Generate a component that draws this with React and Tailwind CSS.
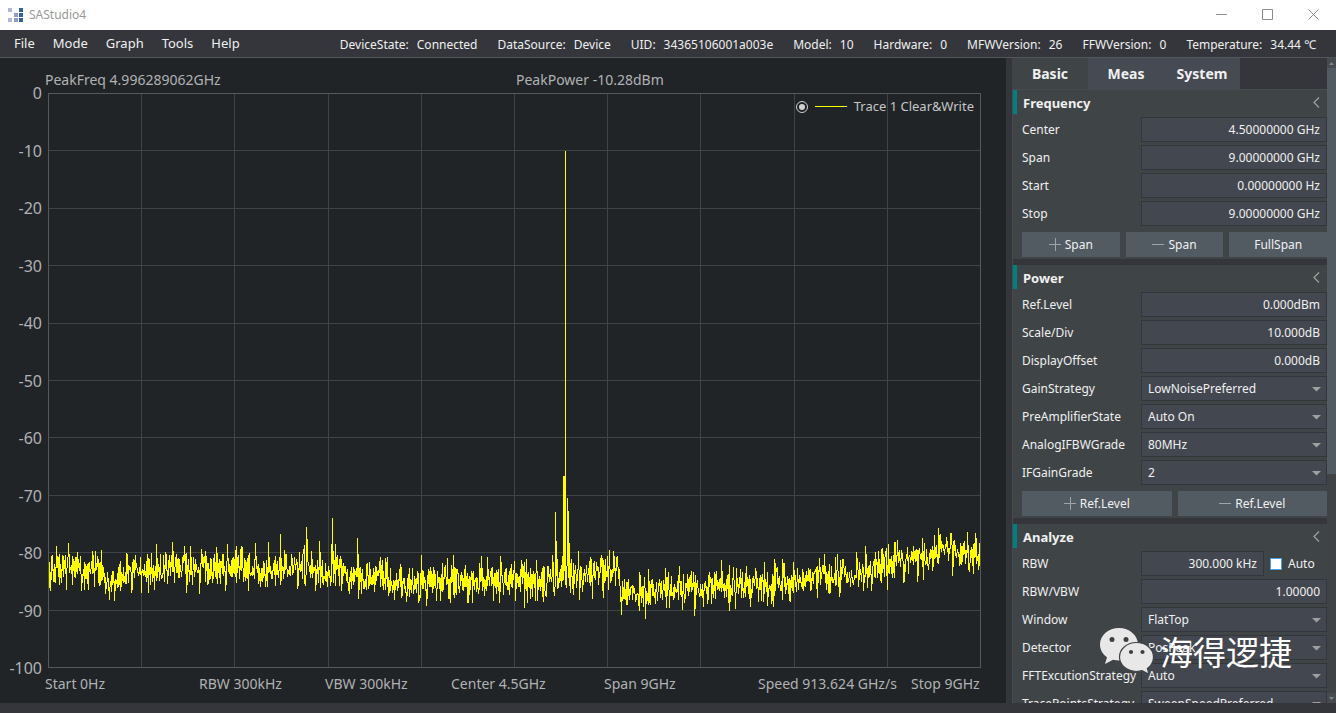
import { useId } from 'react'

const MENUS = ['File', 'Mode', 'Graph', 'Tools', 'Help']

const STATUS = [
  ['DeviceState', 'Connected'],
  ['DataSource', 'Device'],
  ['UID', '34365106001a003e'],
  ['Model', '10'],
  ['Hardware', '0'],
  ['MFWVersion', '26'],
  ['FFWVersion', '0'],
  ['Temperature', '34.44 ℃'],
]

const Y_LABELS = ['0', '-10', '-20', '-30', '-40', '-50', '-60', '-70', '-80', '-90', '-100']

const X_LABELS = [
  'Start 0Hz',
  'RBW 300kHz',
  'VBW 300kHz',
  'Center 4.5GHz',
  'Span 9GHz',
  'Speed 913.624 GHz/s',
  'Stop 9GHz',
]

// plot size in trace units
const PLOT_W = 932
const PLOT_H = 574

// noise floor: [x, y] control points, y grows downwards
const FLOOR = [
  [0, 478], [12, 473], [42, 477], [64, 487], [77, 482], [102, 474], [152, 474], [252, 475],
  [282, 479], [312, 484], [337, 483], [345, 492], [357, 492], [392, 487], [502, 487], [522, 483],
  [564, 479], [570, 481], [572, 500], [602, 497], [652, 493], [702, 492], [752, 488], [802, 481],
  [832, 472], [882, 462], [892, 455], [902, 459], [932, 460],
]

// single bins that stand out of the noise
const BINS = [
  [2, 497], [8, 453], [13, 489], [20, 450], [24, 491], [44, 458], [46, 493], [53, 457], [57, 500],
  [66, 507], [72, 497], [79, 461], [83, 499], [92, 464], [100, 499], [108, 451], [117, 459],
  [119, 490], [124, 449], [138, 499], [142, 453], [151, 500], [154, 461], [160, 490], [169, 460],
  [177, 497], [179, 451], [192, 456], [200, 497], [207, 450], [217, 493], [220, 449], [227, 492],
  [232, 441], [257, 492], [258, 434], [263, 458], [267, 497], [271, 448], [283, 451], [284, 425],
  [287, 451], [292, 463], [293, 497], [309, 445], [310, 505], [326, 498], [339, 464], [346, 506],
  [353, 504], [352, 471], [370, 509], [373, 462], [378, 512], [382, 474], [399, 465], [402, 509],
  [405, 462], [419, 509], [433, 463], [439, 464], [445, 507], [451, 509], [452, 463], [467, 507],
  [476, 514], [478, 466], [482, 505], [497, 502], [504, 462], [507, 419], [508, 448], [515, 383],
  [516, 383], [519, 405], [520, 418], [522, 499], [530, 458], [542, 464], [555, 504], [559, 463],
  [565, 458], [569, 463], [573, 521], [597, 525], [600, 476], [617, 475], [621, 514], [631, 473],
  [634, 516], [646, 522], [673, 467], [681, 517], [687, 515], [688, 475], [707, 475], [725, 513],
  [727, 470], [736, 470], [742, 508], [745, 469], [771, 465], [776, 461], [789, 461], [791, 503],
  [809, 465], [815, 497], [817, 453], [834, 455], [839, 496], [849, 447], [855, 489], [869, 488],
  [874, 445], [885, 473], [890, 435], [892, 441], [898, 444], [902, 440], [904, 482], [916, 448],
  [921, 474], [927, 440], [930, 476], [931, 449],
]

function floorAt(x) {
  let i = 1
  while (i < FLOOR.length - 1 && FLOOR[i][0] < x) i++
  const [x0, y0] = FLOOR[i - 1]
  const [x1, y1] = FLOOR[i]
  return y0 + ((y1 - y0) * (x - x0)) / (x1 - x0)
}

function buildTrace() {
  let seed = 4996289
  const rand = () => {
    seed = (seed * 1103515245 + 12345) % 2147483648
    return seed / 2147483648
  }
  const bins = new Map(BINS)
  const points = []
  for (let x = 1; x < PLOT_W; x++) {
    const base = floorAt(x)
    const noise = () => (rand() + rand() + rand() - 1.5) * 18
    points.push(`${x},${Math.round(base + noise())}`)
    points.push(`${x},${bins.get(x) ?? Math.round(base + noise())}`)
  }
  return points.join(' ')
}

const TRACE = buildTrace()

function Logo() {
  return (
    <svg width="15" height="14" viewBox="0 0 15 14" shapeRendering="crispEdges" aria-hidden="true">
      <path fill="#b0b5da" d="M0 0h4v4H0zM0 10h4v4H0z" />
      <path fill="#8f99ca" d="M6 5h4v4H6zM6 10h4v4H6z" />
      <path fill="#33629b" d="M11 0h4v4h-4zM11 5h4v4h-4zM11 10h4v4h-4z" />
    </svg>
  )
}

function WindowButton({ label, d }) {
  return (
    <button type="button" aria-label={label} className="flex h-full w-[46px] items-center justify-center">
      <svg width="11" height="11" viewBox="0 0 11 11" fill="none" stroke="#8c8c8c">
        <path d={d} />
      </svg>
    </button>
  )
}

function TitleBar() {
  return (
    <header className="flex h-[30px] shrink-0 items-center bg-white pb-px pl-2">
      <Logo />
      <h1 className="ml-[6px] text-[12px] text-[#999999]">SAStudio4</h1>
      <div className="ml-auto flex h-full">
        <WindowButton label="Minimize" d="M0 5.5h11" />
        <WindowButton label="Maximize" d="M.5 .5h10v10H.5z" />
        <WindowButton label="Close" d="M.5 .5l10 10M10.5 .5l-10 10" />
      </div>
    </header>
  )
}

function MenuBar() {
  return (
    <div className="flex h-7 shrink-0 items-center justify-between border-b border-[#50565c] bg-[#34363b] pr-5 text-[12px] whitespace-nowrap text-[#f0f0f0]">
      <nav className="flex gap-[18px] pl-[14px] text-[13px]">
        {MENUS.map(m => (
          <button key={m} type="button">{m}</button>
        ))}
      </nav>
      <dl className="flex gap-5 pt-[2px]">
        {STATUS.map(([name, value]) => (
          <div key={name} className="flex gap-2">
            <dt>{name}:</dt>
            <dd>{value}</dd>
          </div>
        ))}
      </dl>
    </div>
  )
}

function Plot() {
  const cols = Array.from({ length: 9 }, (_, i) => Math.round(((i + 1) * PLOT_W) / 10) + 0.5)
  const rows = Array.from({ length: 9 }, (_, i) => Math.round(((i + 1) * PLOT_H) / 10) + 0.5)
  return (
    <div className="relative min-w-0 flex-1">
      <svg
        className="absolute inset-0 h-full w-full"
        viewBox={`0 0 ${PLOT_W + 1} ${PLOT_H + 1}`}
        preserveAspectRatio="none"
        shapeRendering="crispEdges"
        fill="none"
        role="img"
        aria-label="Spectrum"
      >
        <g stroke="#3f4447">
          {cols.map(x => <path key={x} d={`M${x} 0V${PLOT_H}`} vectorEffect="non-scaling-stroke" />)}
          {rows.map(y => <path key={y} d={`M0 ${y}H${PLOT_W}`} vectorEffect="non-scaling-stroke" />)}
        </g>
        <rect x="0.5" y="0.5" width={PLOT_W} height={PLOT_H} stroke="#525a60" vectorEffect="non-scaling-stroke" />
        <polyline points={TRACE} transform="translate(0.5 0.5)" stroke="#ffff00" vectorEffect="non-scaling-stroke" />
        <path d="M517.5 58V480" stroke="#ffff00" vectorEffect="non-scaling-stroke" />
      </svg>
      <label className="absolute top-1 right-[7px] flex items-center gap-[7px] text-[13px] text-[#c4c6c8]">
        <input
          type="radio"
          name="trace"
          defaultChecked
          className="h-3 w-3 appearance-none rounded-full border border-[#d0d0d0] bg-[#d0d0d0] bg-clip-content p-[2px]"
        />
        <span className="h-px w-8 bg-[#ffff00]" />
        Trace 1 Clear&amp;Write
      </label>
    </div>
  )
}

function SpectrumPanel() {
  return (
    <main className="flex min-w-0 flex-1 flex-col bg-[#212426] pr-[25px] text-[14px] text-[#b0b2b4]">
      <div className="grid h-[35px] shrink-0 grid-cols-[471fr_465fr] items-center pt-2 pl-[45px]">
        <span>PeakFreq 4.996289062GHz</span>
        <span>PeakPower -10.28dBm</span>
      </div>
      <div className="flex min-h-0 flex-1">
        <div className="flex w-12 shrink-0 flex-col items-end justify-between pr-[6px] text-[16px]">
          {Y_LABELS.map(l => (
            <span key={l} className="flex h-0 items-center">{l}</span>
          ))}
        </div>
        <Plot />
      </div>
      <div className="grid h-[35px] shrink-0 grid-cols-[154fr_126fr_126fr_153fr_154fr_153fr_70fr] items-center pb-1 pl-[45px] whitespace-nowrap">
        {X_LABELS.map(l => (
          <span key={l} className="w-0">{l}</span>
        ))}
      </div>
    </main>
  )
}

function Row({ label, id, children }) {
  return (
    <div className="flex h-[25px] items-center pl-[9px]">
      <label htmlFor={id} className="w-[119px] shrink-0 whitespace-nowrap">{label}</label>
      {children}
    </div>
  )
}

function TextInput({ id, value }) {
  return (
    <input
      id={id}
      type="text"
      defaultValue={value}
      className="h-[25px] min-w-0 flex-1 border border-[#34363b] bg-[#43474f] px-[6px] text-right"
    />
  )
}

function TextRow({ label, value }) {
  const id = useId()
  return (
    <Row label={label} id={id}>
      <TextInput id={id} value={value} />
    </Row>
  )
}

function SelectRow({ label, value }) {
  const id = useId()
  return (
    <Row label={label} id={id}>
      <div className="relative min-w-0 flex-1">
        <select id={id} className="block h-[25px] w-full appearance-none border border-[#34363b] bg-[#43474f] px-[6px]">
          <option>{value}</option>
        </select>
        <svg className="pointer-events-none absolute top-[11px] right-[6px]" width="9" height="5" viewBox="0 0 9 5" fill="#a0a0a0" aria-hidden="true">
          <path d="M0 0h9L4.5 4.5z" />
        </svg>
      </div>
    </Row>
  )
}

function RbwRow() {
  const id = useId()
  return (
    <Row label="RBW" id={id}>
      <TextInput id={id} value="300.000 kHz" />
      <label className="flex w-[63px] shrink-0 items-center gap-[6px] pl-[6px]">
        <input type="checkbox" className="h-3 w-3 appearance-none border border-[#4a9ee0] bg-white" />
        Auto
      </label>
    </Row>
  )
}

function StepButton({ sign, label }) {
  return (
    <button type="button" className="flex h-[25px] flex-1 items-center justify-center gap-1 bg-[#525b62]">
      {sign && (
        <svg width="12" height="13" viewBox="0 0 12 13" stroke="#a0a4a6" shapeRendering="crispEdges" aria-hidden="true">
          <path d={sign === '+' ? 'M0 6.5h12M6.5 0v13' : 'M0 6.5h12'} />
        </svg>
      )}
      {label}
    </button>
  )
}

function Section({ title, children }) {
  return (
    <section className="shrink-0 border-b border-[#3f4447] bg-[#3f4447] pb-px">
      <div className="mb-[3px] flex h-6 items-center border-l-4 border-[#008080] pr-[7px] pl-[6px]">
        <h2 className="pt-[3px] text-[13px] font-bold">{title}</h2>
        <button type="button" aria-label={`Collapse ${title}`} className="ml-auto">
          <svg width="7" height="11" viewBox="0 0 7 11" fill="none" stroke="#a0a0a0" strokeWidth="1.2">
            <path d="M6 .5L1 5.5l5 5" />
          </svg>
        </button>
      </div>
      <div className="flex flex-col gap-[3px]">{children}</div>
    </section>
  )
}

function ButtonRow({ children }) {
  return <div className="mt-[3px] flex gap-[6px] pl-[9px]">{children}</div>
}

function ScrollBar() {
  return (
    <div className="flex w-[9px] shrink-0 flex-col bg-[#3f4346]" aria-hidden="true">
      <div className="flex h-[10px] items-center justify-center bg-[#464b50]">
        <svg width="5" height="3" viewBox="0 0 5 3" fill="#7a858e"><path d="M0 3h5L2.5 0z" /></svg>
      </div>
      <div className="flex-1">
        <div className="h-[65%] bg-[#525b62]" />
      </div>
      <div className="flex h-[10px] items-center justify-center bg-[#464b50]">
        <svg width="5" height="3" viewBox="0 0 5 3" fill="#7a858e"><path d="M0 0h5L2.5 3z" /></svg>
      </div>
    </div>
  )
}

function ControlPanel() {
  return (
    <aside className="flex w-[330px] shrink-0 border-l-[6px] border-[#34363b] text-[12px] text-[#f0f0f0]">
      <div className="flex min-w-0 flex-1 flex-col">
        <div className="flex h-8 shrink-0 border-b border-[#464b4f] text-[14px] font-bold">
          <button type="button" className="w-[76px] bg-[#3f4447]">Basic</button>
          <button type="button" className="w-[76px] bg-[#464a52]">Meas</button>
          <button type="button" className="w-[76px] bg-[#464a52]">System</button>
        </div>
        <div className="flex min-h-0 flex-1 flex-col gap-[6px] overflow-hidden border-l border-[#464b4f]">
          <Section title="Frequency">
            <TextRow label="Center" value="4.50000000 GHz" />
            <TextRow label="Span" value="9.00000000 GHz" />
            <TextRow label="Start" value="0.00000000 Hz" />
            <TextRow label="Stop" value="9.00000000 GHz" />
            <ButtonRow>
              <StepButton sign="+" label="Span" />
              <StepButton sign="-" label="Span" />
              <StepButton label="FullSpan" />
            </ButtonRow>
          </Section>
          <Section title="Power">
            <TextRow label="Ref.Level" value="0.000dBm" />
            <TextRow label="Scale/Div" value="10.000dB" />
            <TextRow label="DisplayOffset" value="0.000dB" />
            <SelectRow label="GainStrategy" value="LowNoisePreferred" />
            <SelectRow label="PreAmplifierState" value="Auto On" />
            <SelectRow label="AnalogIFBWGrade" value="80MHz" />
            <SelectRow label="IFGainGrade" value="2" />
            <ButtonRow>
              <StepButton sign="+" label="Ref.Level" />
              <StepButton sign="-" label="Ref.Level" />
            </ButtonRow>
          </Section>
          <Section title="Analyze">
            <RbwRow />
            <TextRow label="RBW/VBW" value="1.00000" />
            <SelectRow label="Window" value="FlatTop" />
            <SelectRow label="Detector" value="PosPeak" />
            <SelectRow label="FFTExcutionStrategy" value="Auto" />
            <SelectRow label="TracePointsStrategy" value="SweepSpeedPreferred" />
          </Section>
        </div>
      </div>
      <ScrollBar />
    </aside>
  )
}

function Watermark() {
  return (
    <div className="pointer-events-none absolute right-[44px] bottom-[38px] flex items-center gap-[6px] text-white">
      <svg width="55" height="48" viewBox="0 0 55 48" aria-hidden="true">
        <path
          fill="#e8e8e8"
          d="M20 1C9.500 1 1 8.200 1 17.500c0 5.300 2.700 9.800 7 12.800L6 37l8-4.200c2 .5 4 .7 6 .7 10.500 0 19-7 19-16S30.500 1 20 1z"
        />
        <path
          fill="#e8e8e8"
          stroke="#3f4447"
          strokeWidth="1.2"
          d="M37.500 15.500c-9.400 0-17 6.500-17 14.500s7.600 14.500 17 14.500c2 0 3.900-.3 5.600-.8l6.900 3.600-1.600-5.800c3.700-2.700 6.100-6.800 6.100-11.500 0-8-7.600-14.500-17-14.500z"
        />
        <g fill="#3c4043">
          <circle cx="13" cy="12.500" r="2.500" />
          <circle cx="27" cy="12.500" r="2.500" />
          <circle cx="32" cy="25" r="2.100" />
          <circle cx="43.500" cy="25" r="2.100" />
        </g>
      </svg>
      <span className="font-['Noto_Sans_CJK_SC',sans-serif] text-[33px] leading-[48px]">海得逻捷</span>
    </div>
  )
}

export default function App() {
  return (
    <div className="relative flex h-screen flex-col overflow-hidden bg-[#34363b] font-['Noto_Sans','Noto_Sans_CJK_SC',sans-serif]">
      <TitleBar />
      <MenuBar />
      <div className="mb-[10px] flex min-h-0 flex-1">
        <SpectrumPanel />
        <ControlPanel />
      </div>
      <Watermark />
    </div>
  )
}
